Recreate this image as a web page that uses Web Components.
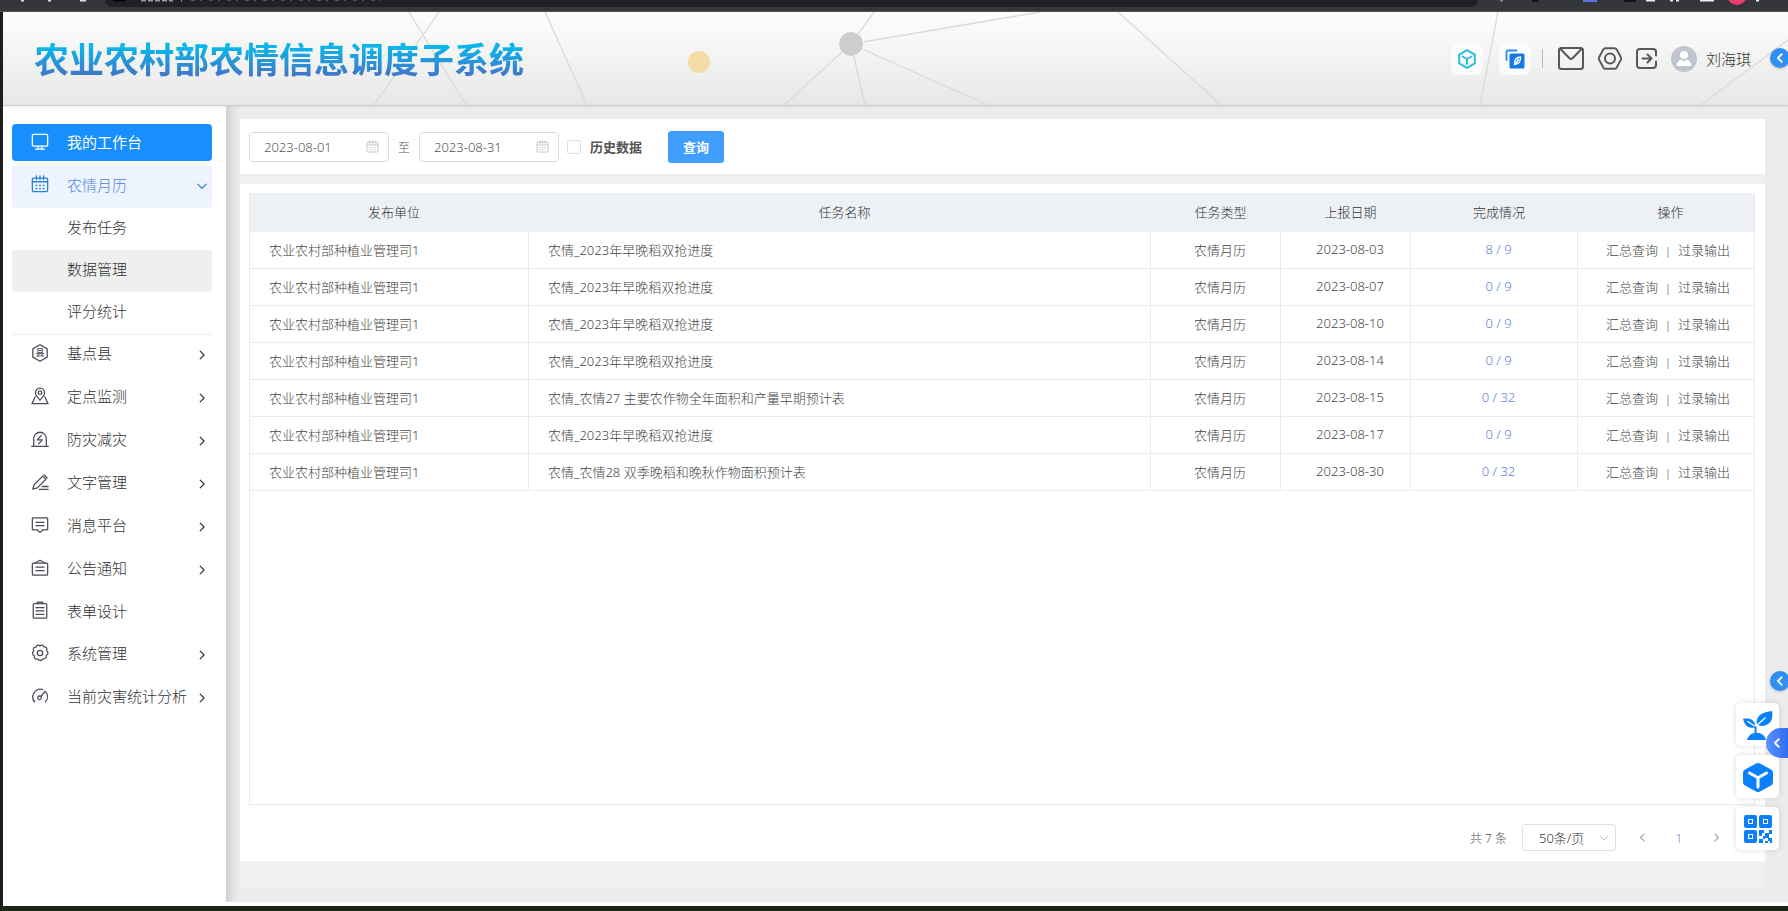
<!DOCTYPE html>
<html lang="zh-CN">
<head>
<meta charset="utf-8">
<title>农业农村部农情信息调度子系统</title>
<style>
  html, body { margin: 0; }
  body {
    font-family: "Noto Sans", "Noto Sans CJK SC", sans-serif;
    font-weight: 300;
    font-size: 13px;
    color: #555;
    background: #fff;
  }
</style>
</head>
<body>
<agri-app></agri-app>

<script>
const ICONS = {
  monitor: '<rect x="1.5" y="1.5" width="17" height="13" rx="1"/><path d="M5 18h10M8 15v2.500M12 15v2.500"/>',
  calendar: '<rect x="1.500" y="3.500" width="17" height="15" rx="1.500"/><path d="M1.500 7.500h17M6 1v4M10 1v4M14 1v4"/><path stroke-dasharray="2 2" stroke-linecap="butt" d="M5 11.500h10M5 15h10"/>',
  county: '<path d="M10 .800l8 4.600v9.200l-8 4.600-8-4.600V5.400z"/><text x="10" y="13.500" font-size="10" text-anchor="middle" font-weight="500" fill="currentColor" stroke="none">县</text>',
  pin: '<path d="M10 14.500C6 10.500 5 8.500 5 6.300a5 5 0 0 1 10 0c0 2.200-1 4.200-5 8.200z"/><circle cx="10" cy="6.300" r="2"/><path d="M4.500 11L1 18.500h18L15.500 11"/>',
  alarm: '<path d="M3 18V9.500a7 7 0 0 1 14 0V18M.800 18.300h18.400"/><path d="M11.500 6L7 11h5.500L8.500 15.500"/>',
  pen: '<path d="M2 18l1.500-5L13 3.500l3.500 3.500L7 16.500zM14.500 2l3.500 3.500M12.500 15H19M9.500 18.300H19"/>',
  message: '<path d="M2.500 2h15a1 1 0 0 1 1 1v11.500a1 1 0 0 1-1 1H13l-3 3-3-3H2.500a1 1 0 0 1-1-1V3a1 1 0 0 1 1-1zM5.500 7h9M5.500 10.800h9"/>',
  board: '<rect x="1.500" y="4.500" width="17" height="13.500" rx="1"/><path d="M4.500 4.500L10 1.300l5.500 3.200M5.500 9h9M5.500 13h9"/>',
  clipboard: '<rect x="2.500" y="3" width="15" height="16" rx="1"/><path d="M7 3V1.300h6V3M5.500 7.300h9M5.500 11h9M5.500 14.800h9"/>',
  gear: '<path d="M10 2.200C11.500.500 13.500 1 14.300 3.300 17 3 18.500 4.800 17.300 7.300c2.200 1.700 2 4.200-.300 5.200.500 2.800-1.200 4.500-3.700 4-1.500 2.400-4.300 2.400-5.600.300-2.700.600-4.600-1-4-3.700C1.300 12 1 9.500 3 7.700 1.800 5 3.200 3.200 5.800 3.400 6.500 1 8.500.500 10 2.200z"/><circle cx="10" cy="10" r="3"/>',
  gauge: '<path d="M4 16.500A8.600 8.600 0 0 1 13 2.800M16.500 5.500a8.600 8.600 0 0 1-.500 11M4 16.500L2.500 15M11.200 10.300L15.500 5"/><circle cx="9.500" cy="12" r="2"/>',
  right: '<path d="M7 3.500l6.500 6.500L7 16.500"/>',
  left: '<path d="M13 3.500L6.500 10l6.500 6.500"/>',
  down: '<path d="M3 7l7 7 7-7"/>',
  cube: '<path d="M10 1.200l7.800 4.400v8.800L10 18.800l-7.800-4.400V5.600z"/><path d="M5.500 7.500L10 10l4.500-2.500M10 10v5"/>',
  compass: '<path d="M1.500 11V3a1.500 1.500 0 0 1 1.500-1.500h8.500" stroke="#2f8bee" stroke-width="1.800"/><rect x="4.500" y="4.500" width="15" height="15" rx="1.500" fill="#147be6" stroke="none"/><path d="M15.500 8c.300 4-2 7-6 7.500-.300-4 2-7 6-7.500zM10.500 14.500l3-4" stroke="#fff" stroke-width="1.300"/>',
  mail: '<rect x="1" y="1" width="24" height="21" rx="2.500"/><path d="M2.500 2l9 9.300q1.500 1.500 3 0L23.500 2"/>',
  hexagon: '<path d="M7.500 1.200h9q1.500 0 2.300 1.400l4 7.500q.700 1.400 0 2.800l-4 7.500q-.800 1.400-2.300 1.400h-9q-1.500 0-2.300-1.400l-4-7.500q-.700-1.400 0-2.800l4-7.500q.800-1.400 2.300-1.400z"/><circle cx="12" cy="11.500" r="5"/>',
  exit: '<path d="M20 7.500V4a3 3 0 0 0-3-3H4a3 3 0 0 0-3 3v13a3 3 0 0 0 3 3h13a3 3 0 0 0 3-3v-3.500M6.500 10.500H15M11.500 6.500l4 4-4 4"/>',
  avatar: '<circle cx="13" cy="13" r="13" fill="#c0c4cc" stroke="none"/><circle cx="13" cy="9" r="4" fill="#fff" stroke="none"/><path d="M5.500 20c.500-4 2-6 5-6.500l2.500 2 2.500-2c3 .500 4.500 2.500 5 6.500z" fill="#fff" stroke="none"/>',
  sprout: '<g fill="#0c80fb" stroke="none"><path d="M30 1c1.500 9-2 15-11 15.500-3 0-5-1.500-5-4C14.500 5 20 2.500 30 1z"/><path d="M0 9c8-1 12 1 13 9-7 1.500-11-1-13-9z"/><path d="M4 31c2-5 5-7.500 10-7.500S22 26 24 31z"/></g><path d="M13 24V17.500" stroke="#0c80fb" stroke-width="2"/><path d="M13.500 16.500L23 8M5 12l7 4.500" stroke="#fff" stroke-width="1.200"/>',
  box: '<path d="M15 1q1.200 0 2 .500l11 6q2 1.200 2 3v10q0 1.800-2 3l-11 6q-2 1-4 0l-11-6q-2-1.200-2-3v-10q0-1.800 2-3l11-6q1-.500 2-.500z" fill="#0c80fb" stroke="none"/><path d="M6.500 11l8.500 4.800 8.500-4.800M15 15.500V25" stroke="#fff" stroke-width="3"/>',
  qr: '<g fill="none" stroke="#0c80fb" stroke-width="4"><rect x="3" y="3" width="9" height="9"/><rect x="18" y="3" width="9" height="9"/><rect x="3" y="18" width="9" height="9"/></g><g fill="#0c80fb" stroke="none"><rect x="6" y="6" width="3" height="3"/><rect x="21" y="6" width="3" height="3"/><rect x="6" y="21" width="3" height="3"/><path d="M16 16h5v3h-2v3h-3zM26 16h3v4h-3zM22 19h4v5h-4zM16 25h4v4h-4zM20 22h2v3h-2zM25 24h4v5h-2v-2h-2zM22 27h3v2h-3z"/></g>'
};
const BOXES = { mail: '0 0 26 23', hexagon: '0 0 24 23', exit: '0 0 21 21', avatar: '0 0 26 26', sprout: '0 0 31 31', box: '0 0 30 30', qr: '0 0 30 30' };

function define(tag, render) {
  customElements.define(tag, class extends HTMLElement {
    connectedCallback() {
      if (this.shadowRoot) return;
      this.attachShadow({ mode: 'open' }).innerHTML = render(this);
    }
  });
}

/* Line icon; its size and stroke come from the surrounding styles. */
define('ui-icon', el => {
  const name = el.getAttribute('name');
  return `<style>
    :host { display: inline-block; flex: none; width: 18px; height: 18px; }
    svg { display: block; width: 100%; height: 100%; fill: none; stroke: currentColor;
      stroke-width: var(--stroke, 1.4); stroke-linecap: round; stroke-linejoin: round; }
  </style><svg viewBox="${BOXES[name] || '0 0 20 20'}" aria-hidden="true">${ICONS[name]}</svg>`;
});

define('browser-strip', () => `<style>
  :host { display: flex; height: 12px; background: #35363a; border-bottom: 1px solid #555; box-sizing: border-box; overflow: hidden; }
  .start { flex: 0 0 105px; }
  .bar { flex: 1; height: 7px; background: #202124; border-radius: 0 0 12px 12px; }
  .end { flex: 0 0 310px; }
  svg { display: block; }
</style>
<div class="start"><svg width="105" height="7"><path d="M21 0h3M48 0h3M80 0h6" stroke="#ddd" stroke-width="3"/></svg></div>
<div class="bar"><svg width="300" height="7"><path d="M8 0h12" stroke="#000" stroke-width="3"/><path d="M36 0h32M76 0h1" stroke="#999" stroke-width="3" stroke-dasharray="5 2"/><path d="M86 0h190" stroke="#555" stroke-width="2" stroke-dasharray="4 5 2 7"/></svg></div>
<div class="end"><svg width="310" height="7">
  <path d="M22 0h3M146 0h3" stroke="#888" stroke-width="3"/><path d="M54 0h6M146 0h12" stroke="#111" stroke-width="4"/>
  <path d="M105 0h14" stroke="#5b73e8" stroke-width="4"/><path d="M168 0h9M192 0h3M198 0h3M222 0h14M278 0h3" stroke="#eee" stroke-width="3"/>
  <circle cx="259" cy="-5" r="10" fill="#ec3d72"/></svg></div>`);

define('app-header', () => `<style>
  :host { position: relative; display: flex; align-items: center; height: 94px; box-sizing: border-box; padding: 0 37px 0 31px;
    border-bottom: 1px solid #cbcccc; box-shadow: 0 1px 2px #0001;
    background: linear-gradient(180deg, #fdfdfc, #f3f3f2 50%, #e6e7e7); }
  .lines { position: absolute; inset: 0; width: 100%; height: 100%; }
  h1 { position: relative; margin: 0; padding-bottom: 2px; font-size: 35px; line-height: 44px; font-weight: 700; color: transparent;
    font-family: "Noto Sans CJK SC", sans-serif; white-space: nowrap;
    background: linear-gradient(180deg, #0bb5ea 25%, #4274c8 88%); -webkit-background-clip: text; background-clip: text; }
  nav { position: relative; display: flex; align-items: center; margin-left: auto; color: #54585f; --stroke: 2; }
  a { display: flex; color: inherit; text-decoration: none; }
  .tile { width: 32px; height: 32px; border-radius: 8px; background: #fafbfb; align-items: center; justify-content: center; margin-right: 16px; }
  .tile ui-icon { width: 20px; height: 20px; }
  .cube { color: #2bbcdc; }
  .tile + .tile { margin-right: 11px; }
  .sep { width: 1px; height: 19px; background: #bbb; margin-right: 15px; }
  .mail { width: 26px; height: 23px; margin-right: 14px; }
  .hex { width: 24px; height: 23px; margin-right: 14px; }
  .exit { width: 21px; height: 21px; margin-right: 14px; }
  .avatar { width: 26px; height: 26px; margin-right: 9px; }
  .user { align-items: center; font-size: 15px; color: #333; }
</style>
<svg class="lines" viewBox="0 0 1785 93" preserveAspectRatio="xMidYMid slice" aria-hidden="true">
  <g stroke="#dadad9" stroke-width="1.300" fill="none">
    <path d="M406 0l57 93M436 0l-65 93M542 0l42 93M848 32l23-32M848 32L1037 0M848 32l137 61M848 32l14 61M848 32l-67 61M1115 0l103 93M1495 0l-18 93M1698 93l87-65"/>
  </g>
  <circle cx="848" cy="32" r="12.500" fill="#cdcdcd" stroke="#fafafa"/><circle cx="696" cy="50" r="11" fill="#f4dda5"/>
</svg>
<h1>农业农村部农情信息调度子系统</h1>
<nav aria-label="用户工具">
  <a class="tile cube" href="#" aria-label="应用"><ui-icon name="cube"></ui-icon></a>
  <a class="tile" href="#" aria-label="导航"><ui-icon name="compass"></ui-icon></a>
  <span class="sep"></span>
  <a href="#" aria-label="邮件"><ui-icon class="mail" name="mail"></ui-icon></a>
  <a href="#" aria-label="设置"><ui-icon class="hex" name="hexagon"></ui-icon></a>
  <a href="#" aria-label="退出"><ui-icon class="exit" name="exit"></ui-icon></a>
  <a class="user" href="#"><ui-icon class="avatar" name="avatar"></ui-icon>刘海琪</a>
</nav>`);

define('nav-item', el => {
  const icon = el.getAttribute('icon'), arrow = el.getAttribute('arrow');
  return `<style>
  :host { display: block; }
  a { display: flex; align-items: center; box-sizing: border-box; height: 43px; padding: 0 4px 4px 19px; color: #333; font-size: 15px; text-decoration: none; border-radius: 4px; }
  .icon { margin-right: 18px; color: #4a4e59; }
  .label { flex: 1; white-space: nowrap; }
  .arrow { width: 12px; height: 12px; margin-top: 4px; color: #333; --stroke: 2; }
  :host([kind=leaf]) a { height: 42px; }
  :host([kind=home]) { margin-bottom: 5px; }
  :host([kind=home]) a { height: 37px; padding-bottom: 2px; background: #188fff; color: #fff; font-weight: 400; }
  :host([kind=home]) .icon { color: #fff; }
  :host([kind=open]) a { height: 42px; padding-bottom: 6px; background: #edf4fe; color: #4f84dc; border-radius: 2px; }
  :host([kind=open]) .icon, :host([kind=open]) .arrow { color: #2a7fd0; }
  :host([kind=sub]) a { height: 42px; padding-left: 55px; padding-bottom: 6px; }
  :host([current]) a { background: #eeefef; }
  </style><a href="#">${icon ? `<ui-icon class="icon" name="${icon}"></ui-icon>` : ''}<span class="label"><slot></slot></span>${arrow ? `<ui-icon class="arrow" name="${arrow}"></ui-icon>` : ''}</a>`;
});

define('side-nav', () => `<style>
  :host { display: block; box-sizing: border-box; padding: 18px 14px 0 9px; background: #fff; }
  hr { height: 1px; margin: 0 0 -2px; border: 0; background: #ececec; }
</style>
<nav aria-label="主菜单">
<nav-item kind="home" icon="monitor">我的工作台</nav-item>
<nav-item kind="open" icon="calendar" arrow="down">农情月历</nav-item>
<nav-item kind="sub">发布任务</nav-item>
<nav-item kind="sub" current>数据管理</nav-item>
<nav-item kind="sub">评分统计</nav-item>
<hr>
<nav-item icon="county" arrow="right">基点县</nav-item>
<nav-item icon="pin" arrow="right">定点监测</nav-item>
<nav-item icon="alarm" arrow="right">防灾减灾</nav-item>
<nav-item icon="pen" arrow="right">文字管理</nav-item>
<nav-item icon="message" arrow="right">消息平台</nav-item>
<nav-item icon="board" arrow="right">公告通知</nav-item>
<nav-item kind="leaf" icon="clipboard">表单设计</nav-item>
<nav-item icon="gear" arrow="right">系统管理</nav-item>
<nav-item icon="gauge" arrow="right">当前灾害统计分析</nav-item>
</nav>`);

define('date-field', el => `<style>
  :host { display: flex; align-items: center; width: 140px; height: 30px; box-sizing: border-box; border: 1px solid #d9dce2; border-radius: 4px; padding: 0 9px 0 14px; background: #fff; }
  input { flex: 1; min-width: 0; border: 0; padding: 0; outline: 0; background: none; font: inherit; color: #555; }
  ui-icon { width: 13px; height: 13px; color: #c0c4cc; --stroke: 1.4; }
</style><input type="text" aria-label="${el.getAttribute('label')}" value="${el.getAttribute('value')}"><ui-icon name="calendar"></ui-icon>`);

define('filter-bar', () => `<style>
  :host { display: flex; align-items: center; height: 55px; box-sizing: border-box; padding: 0 9px; background: #fff; }
  .to { width: 30px; text-align: center; font-size: 12px; }
  input { appearance: none; width: 14px; height: 14px; margin: 0 9px 0 8px; border: 1px solid #dcdfe6; border-radius: 2px; background: #fff; }
  label { font-weight: 700; color: #555; }
  button { width: 56px; height: 32px; margin-left: 26px; padding: 0; border: 0; border-radius: 3px; background: #409eff; color: #fff; font: inherit; font-weight: 700; }
</style>
<date-field label="开始日期" value="2023-08-01"></date-field>
<span class="to">至</span>
<date-field label="结束日期" value="2023-08-31"></date-field>
<input type="checkbox" id="history"><label for="history">历史数据</label>
<button type="button">查询</button>`);

const ROWS = [
  ['农情_2023年早晚稻双抢进度', '2023-08-03', '8 / 9'],
  ['农情_2023年早晚稻双抢进度', '2023-08-07', '0 / 9'],
  ['农情_2023年早晚稻双抢进度', '2023-08-10', '0 / 9'],
  ['农情_2023年早晚稻双抢进度', '2023-08-14', '0 / 9'],
  ['农情_农情27 主要农作物全年面积和产量早期预计表', '2023-08-15', '0 / 32'],
  ['农情_2023年早晚稻双抢进度', '2023-08-17', '0 / 9'],
  ['农情_农情28 双季晚稻和晚秋作物面积预计表', '2023-08-30', '0 / 32']
];

define('task-table', () => `<style>
  :host { display: block; box-sizing: border-box; border: 1px solid #e8eaed; border-top: 0; }
  table { width: 100%; table-layout: fixed; border-collapse: separate; border-spacing: 0; }
  col:nth-child(1) { width: 279px; } col:nth-child(3), col:nth-child(4) { width: 130px; }
  col:nth-child(5) { width: 167px; } col:nth-child(6) { width: 176px; }
  th, td { box-sizing: border-box; padding: 0 10px 2px 19px; text-align: center; white-space: nowrap; }
  th { height: 39px; background: #edf1f5; font-weight: 300; color: #333; }
  td { height: 37px; border-bottom: 1px solid #e8eaeb; border-right: 1px solid #ebedef; color: #444; }
  td:nth-child(-n+2) { text-align: left; }
  td:last-child { border-right: 0; padding-left: 14px; }
  a { color: inherit; text-decoration: none; }
  .count { color: #5a80de; }
  .bar { margin: 0 7px; font-size: 11px; }
</style>
<table><colgroup><col><col><col><col><col><col></colgroup>
<thead><tr>${['发布单位', '任务名称', '任务类型', '上报日期', '完成情况', '操作'].map(t => `<th scope="col">${t}</th>`).join('')}</tr></thead>
<tbody>${ROWS.map(([name, date, count]) => `<tr><td>农业农村部种植业管理司1</td><td>${name}</td><td>农情月历</td><td>${date}</td><td><a class="count" href="#">${count}</a></td><td><a href="#">汇总查询</a><span class="bar">|</span><a href="#">过录输出</a></td></tr>`).join('')}</tbody></table>`);

define('pager-bar', () => `<style>
  :host { display: flex; align-items: center; justify-content: flex-end; height: 65px; padding-right: 29px; color: #555; font-size: 12px; }
  .size { position: relative; display: flex; margin: 0 16px 0 15px; }
  select { appearance: none; width: 94px; height: 27px; border: 1px solid #dcdfe6; border-radius: 3px; background: #fff; padding: 0 16px; font: inherit; font-size: 13px; color: #333; }
  .size ui-icon { position: absolute; right: 7px; top: 8px; width: 10px; height: 12px; color: #c0c4cc; --stroke: 2; }
  button { display: flex; justify-content: center; align-items: center; width: 20px; height: 28px; padding: 0; border: 0; background: none; font: inherit; font-size: 13px; color: #7f92ea; margin-right: 17px; }
  button:last-child { margin: 0; }
  button ui-icon { width: 11px; height: 11px; color: #a5a9b5; --stroke: 2.2; }
</style>
<span>共 7 条</span>
<span class="size"><select aria-label="每页条数"><option>50条/页</option></select><ui-icon name="down"></ui-icon></span>
<button type="button" aria-label="上一页"><ui-icon name="left"></ui-icon></button>
<button type="button">1</button>
<button type="button" aria-label="下一页"><ui-icon name="right"></ui-icon></button>`);

/* Shortcuts that float over the right edge of the window. */
define('float-dock', () => `<style>
  button { padding: 0; border: 0; display: flex; align-items: center; justify-content: center; color: #fff; --stroke: 3; }
  .knob { position: fixed; right: -2px; width: 20px; height: 20px; border-radius: 50%; background: #2f8ff2; box-shadow: 0 1px 3px #0003; }
  .knob ui-icon, .tab ui-icon { width: 12px; height: 12px; }
  .top { top: 48px; } .low { bottom: 220px; }
  .cards { position: fixed; right: 9px; bottom: 61px; display: flex; flex-direction: column; gap: 9px; }
  .cards button { width: 43px; height: 43px; border-radius: 5px; background: #fff; box-shadow: 0 0 6px #0002; }
  .cards ui-icon { width: 30px; height: 30px; }
  .tab { position: fixed; right: 0; bottom: 153px; width: 22px; height: 30px; border-radius: 15px 0 0 15px; background: linear-gradient(90deg, #5b92ff, #2f6cf0); }
</style>
<button type="button" class="knob top" aria-label="展开"><ui-icon name="left"></ui-icon></button>
<button type="button" class="knob low" aria-label="展开"><ui-icon name="left"></ui-icon></button>
<div class="cards">
  <button type="button" aria-label="农作物"><ui-icon name="sprout"></ui-icon></button>
  <button type="button" aria-label="应用"><ui-icon name="box"></ui-icon></button>
  <button type="button" aria-label="二维码"><ui-icon name="qr"></ui-icon></button>
</div>
<button type="button" class="tab" aria-label="收起"><ui-icon name="left"></ui-icon></button>`);

define('agri-app', () => `<style>
  :host { display: flex; flex-direction: column; min-height: 100vh; }
  .frame { flex: 1; display: flex; flex-direction: column; border-left: 3px solid #1e1e1f; border-bottom: 5px solid #1b2814; }
  .body { flex: 1; display: flex; padding-bottom: 4px; }
  side-nav { flex: 0 0 223px; }
  main { flex: 1; min-width: 0; display: flex; padding: 13px 23px 15px 14px;
    background: linear-gradient(90deg, #d0d2d3, #e4e6e6 8px, #ebeced 14px); }
  .content { flex: 1; min-width: 0; display: flex; flex-direction: column; background: #eff0f2; gap: 10px; padding-bottom: 26px; }
  .panel { flex: 1; display: flex; flex-direction: column; padding: 9px 10px 0 9px; background: #fff; }
  task-table { flex: 1; }
  pager-bar { flex: none; margin-bottom: -9px; }
</style>
<browser-strip></browser-strip>
<div class="frame">
  <app-header></app-header>
  <div class="body">
    <side-nav></side-nav>
    <main><div class="content">
      <filter-bar></filter-bar>
      <section class="panel"><task-table></task-table><pager-bar></pager-bar></section>
    </div></main>
  </div>
</div>
<float-dock></float-dock>`);
</script>
</body>
</html>
